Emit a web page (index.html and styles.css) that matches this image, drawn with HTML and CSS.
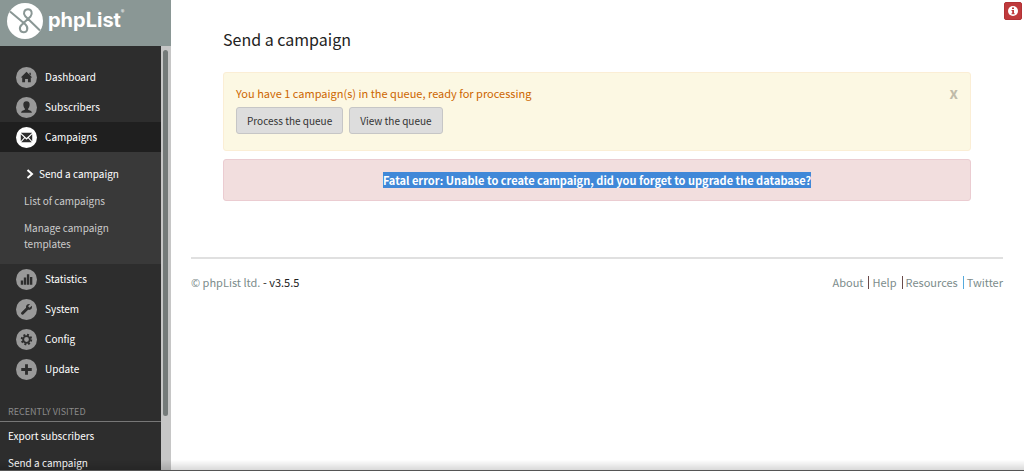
FILE: index.html
```html
<!DOCTYPE html>
<html lang="en">

<head>
    <meta charset="UTF-8">
    <meta name="viewport" content="width=device-width, initial-scale=1.0">
    <title>phpList :: Send a campaign</title>
    <link rel="stylesheet" href="styles.css">
</head>

<body>

    <div class="page">
        <div class="sidebar">
            <a class="logo" href="#">
                <svg width="36" height="36" viewBox="0 0 36 36" fill="none" stroke="#8a9795" stroke-width="2">
                    <circle cx="18" cy="18" r="18" fill="#fff" stroke="none"/>
                    <path d="M3 8.500 L18.500 21.500 C22 25 20 29.300 16.700 29.300 C13 29.300 11.500 25 14.500 22 L23.500 13.500 C26 10.500 24.500 6.300 21 6.300 C17.500 6.300 15.500 10 18.300 13.300 L33 27.500"/>
                </svg>
                <span class="logo-text">phpList</span><span class="logo-mark">®</span>
            </a>
            <div class="menu-wrap">
                <nav class="menu">
                    <ul class="menu-list">
                        <li><a class="menu-item" href="#">
                            <svg class="icon" viewBox="0 0 22 22"><path d="M11 5 L17 11 H15.500 V16 H12.500 V12.500 H9.500 V16 H6.500 V11 H5 Z M14 6 H15.500 V9 L14 7.500 Z"/></svg>
                            Dashboard</a></li>
                        <li><a class="menu-item" href="#">
                            <svg class="icon" viewBox="0 0 22 22"><path d="M11 4.500 C13.500 4.500 14.500 6 14.300 8.500 C14.100 10.500 13.500 11.500 12.700 12.300 V13.300 C14.500 13.800 16.500 14.300 16.700 16.500 H5.300 C5.500 14.300 7.500 13.800 9.300 13.300 V12.300 C8.500 11.500 7.900 10.500 7.700 8.500 C7.500 6 8.500 4.500 11 4.500 Z"/></svg>
                            Subscribers</a></li>
                        <li>
                            <a class="menu-item active" href="#">
                            <svg class="icon" viewBox="0 0 22 22"><path d="M5 6 H17 L11 11.500 Z M5 7.500 L8.500 11 L5 15 Z M17 7.500 L13.500 11 L17 15 Z M5.500 16 L9.300 11.700 L11 13.300 L12.700 11.700 L16.500 16 Z"/></svg>
                            Campaigns</a>
                            <ul class="submenu">
                                <li><a class="current" href="#"><svg class="chevron" viewBox="0 0 8 10"><path d="M1.500 1 L6 5 L1.500 9"/></svg>Send a campaign</a></li>
                                <li><a href="#">List of campaigns</a></li>
                                <li><a href="#">Manage campaign templates</a></li>
                            </ul>
                        </li>
                        <li><a class="menu-item" href="#">
                            <svg class="icon" viewBox="0 0 22 22"><path d="M5 12 H7.500 V16.500 H5 Z M8.200 9 H10.700 V16.500 H8.200 Z M11.400 5.500 H13.900 V16.500 H11.400 Z M14.600 8.500 H17.100 V16.500 H14.600 Z"/></svg>
                            Statistics</a></li>
                        <li><a class="menu-item" href="#">
                            <svg class="icon" viewBox="0 0 22 22"><path d="M16.500 7 L14.300 9.200 L12.600 7.500 L14.800 5.300 C12.500 4.500 10 6.300 10.500 9.200 L5.500 14.200 C4.500 15.300 6.500 17.300 7.600 16.300 L12.700 11.300 C15.500 12 17.500 9.500 16.500 7 Z"/></svg>
                            System</a></li>
                        <li><a class="menu-item" href="#">
                            <svg class="icon" viewBox="0 0 22 22"><circle class="gear-teeth" cx="11" cy="11" r="5"/><circle class="gear-ring" cx="11" cy="11" r="3.500"/></svg>
                            Config</a></li>
                        <li><a class="menu-item" href="#">
                            <svg class="icon" viewBox="0 0 22 22"><path d="M9.500 5.500 H12.500 V9.500 H16.500 V12.500 H12.500 V16.500 H9.500 V12.500 H5.500 V9.500 H9.500 Z"/></svg>
                            Update</a></li>
                    </ul>
                    <h3 class="recent-title">Recently visited</h3>
                    <ul class="recent">
                        <li><a href="#">Export subscribers</a></li>
                        <li><a href="#">Send a campaign</a></li>
                    </ul>
                </nav>
                <div class="scrollbar"><div class="thumb"></div></div>
            </div>
        </div>

        <main class="main">
            <div class="content">
                <h1>Send a campaign</h1>
                <div class="note">
                    <div>
                        <p>You have 1 campaign(s) in the queue, ready for processing</p>
                        <div class="actions">
                            <button class="button" type="button">Process the queue</button>
                            <button class="button" type="button">View the queue</button>
                        </div>
                    </div>
                    <button class="close" type="button">x</button>
                </div>
                <div class="error"><span class="selected">Fatal error: Unable to create campaign, did you forget to upgrade the database?</span></div>
            </div>
            <footer class="footer">
                <div><a href="#">© phpList ltd.</a> - v3.5.5</div>
                <ul class="links">
                    <li><a href="#">About</a></li>
                    <li><a href="#">Help</a></li>
                    <li><a href="#">Resources</a></li>
                    <li class="last"><a href="#">Twitter</a></li>
                </ul>
            </footer>
        </main>
    </div>

    <button class="info" type="button" aria-label="Info">
        <svg width="10" height="10" viewBox="0 0 10 10"><circle cx="5" cy="5" r="5" fill="#fff"/><path d="M4 1.500 H6 V3 H4 Z M3.500 4 H6 V7.200 H6.700 V8.300 H3.500 V7.200 H4.200 V5 H3.500 Z" fill="#bf3a3c"/></svg>
    </button>
    <div class="bottom-edge"></div>

</body>

</html>
```
FILE: styles.css
```css
* {
    box-sizing: border-box;
}

body {
    margin: 0;
    font-family: "Noto Sans CJK SC", "Noto Sans", sans-serif;
    font-size: 11px;
    line-height: 16px;
    color: #222;
    background-color: #fff;
}

ul {
    list-style: none;
    margin: 0;
    padding: 0;
}

a {
    color: #7c8c8b;
    text-decoration: none;
}

.page {
    display: flex;
    height: 100vh;
    overflow: hidden;
}

/* Sidebar */
.sidebar {
    display: flex;
    flex-direction: column;
    flex: 0 0 171px;
    font-size: 10px;
}

.logo {
    display: flex;
    flex: 0 0 46px;
    align-items: flex-start;
    padding: 3px 7px;
    background-color: #8a9795;
    color: #fff;
}

.logo-text {
    margin-left: 5px;
    font-family: Inter, sans-serif;
    font-size: 20px;
    font-weight: 700;
    line-height: 34px;
}

.logo-mark {
    font-size: 7px;
    line-height: 18px;
}

.menu-wrap {
    display: flex;
    flex: 1;
    min-height: 0;
}

.menu {
    flex: 1;
    overflow: hidden;
    padding-top: 16px;
    background-color: #2d2d2d;
}

.menu a {
    color: #fff;
}

.menu .menu-item {
    display: flex;
    align-items: center;
    gap: 8px;
    height: 30px;
    padding-left: 16px;
}

.menu .active {
    background-color: #1f1f1f;
}

.icon {
    width: 21px;
    height: 21px;
    border-radius: 50%;
    background-color: #999;
    fill: #2d2d2d;
}

.active .icon {
    background-color: #fff;
}

.gear-ring,
.gear-teeth {
    fill: none;
    stroke: #2d2d2d;
    stroke-width: 2;
}

.gear-teeth {
    stroke-dasharray: 2 1.927;
}

.submenu {
    display: flex;
    flex-direction: column;
    gap: 11px;
    padding: 14px 24px 12px;
    background-color: #393939;
}

.menu .submenu a {
    display: block;
    max-width: 100px;
    color: #ccc;
}

.menu .submenu .current {
    display: flex;
    align-items: center;
    gap: 5px;
    padding-left: 2px;
    color: #fff;
    white-space: nowrap;
}

.chevron {
    flex: none;
    width: 8px;
    height: 10px;
    fill: none;
    stroke: #fff;
    stroke-width: 2;
}

.recent-title {
    margin: 20px 0 0;
    padding: 0 8px 1px;
    border-bottom: 1px solid #777;
    color: #8a8a8a;
    font-size: 9px;
    font-weight: 400;
    text-transform: uppercase;
}

.recent {
    display: flex;
    flex-direction: column;
    gap: 11px;
    padding: 6px 8px;
}

.scrollbar {
    flex: 0 0 10px;
    padding: 4px 3px 0 2px;
    background-color: #c6c6c6;
}

.thumb {
    height: 87%;
    border-radius: 3px;
    background-color: #747a79;
}

/* Main column */
.main {
    flex: 1;
    padding: 27px 21px 0 20px;
}

.content {
    padding: 0 32px;
}

h1 {
    margin: 0 0 21px;
    font-size: 16px;
    font-weight: 400;
    line-height: 24px;
}

.note {
    display: flex;
    justify-content: space-between;
    align-items: flex-start;
    margin-bottom: 8px;
    padding: 12px 12px 16px;
    border: 1px solid #fbeed5;
    border-radius: 3px;
    background-color: #fcf8e3;
    color: #cc6600;
}

.note p {
    margin: 0 0 6px;
}

.actions {
    display: flex;
    gap: 6px;
}

.button {
    height: 27px;
    padding: 0 10px;
    border: 1px solid #c6c6c6;
    border-radius: 3px;
    background-color: #ddd;
    color: #333;
    font: inherit;
    font-size: 10px;
}

.close {
    padding: 0;
    border: 0;
    background: none;
    color: #c0bba9;
    font: inherit;
    font-size: 15px;
    font-weight: 700;
}

.error {
    padding: 12px;
    border: 1px solid #ebccd1;
    border-radius: 3px;
    background-color: #f2dede;
    font-weight: 700;
    text-align: center;
}

.selected {
    display: block;
    width: fit-content;
    margin: 0 auto;
    background-color: #4088d8;
    color: #fff;
}

.footer {
    display: flex;
    justify-content: space-between;
    margin-top: 56px;
    padding-top: 15px;
    border-top: 2px solid #e0e0e0;
}

.links {
    display: flex;
    align-items: center;
    line-height: 13px;
}

.links li + li {
    margin-left: 5px;
    padding-left: 3px;
    border-left: 1px solid #6b4a4a;
}

.links .last {
    border-left-color: #55aadd;
}

.info {
    position: absolute;
    top: 2px;
    right: 2px;
    display: flex;
    align-items: center;
    justify-content: center;
    width: 18px;
    height: 18px;
    padding: 0;
    border: 1px solid #b23235;
    border-radius: 2px;
    background-color: #bf3a3c;
}

/* Shadow along the window's lower edge */
.bottom-edge {
    position: fixed;
    right: 0;
    bottom: 0;
    left: 0;
    height: 11px;
    border-bottom: 1px solid #555;
    background: linear-gradient(rgba(0, 0, 0, 0), rgba(0, 0, 0, 0.15));
}
```
